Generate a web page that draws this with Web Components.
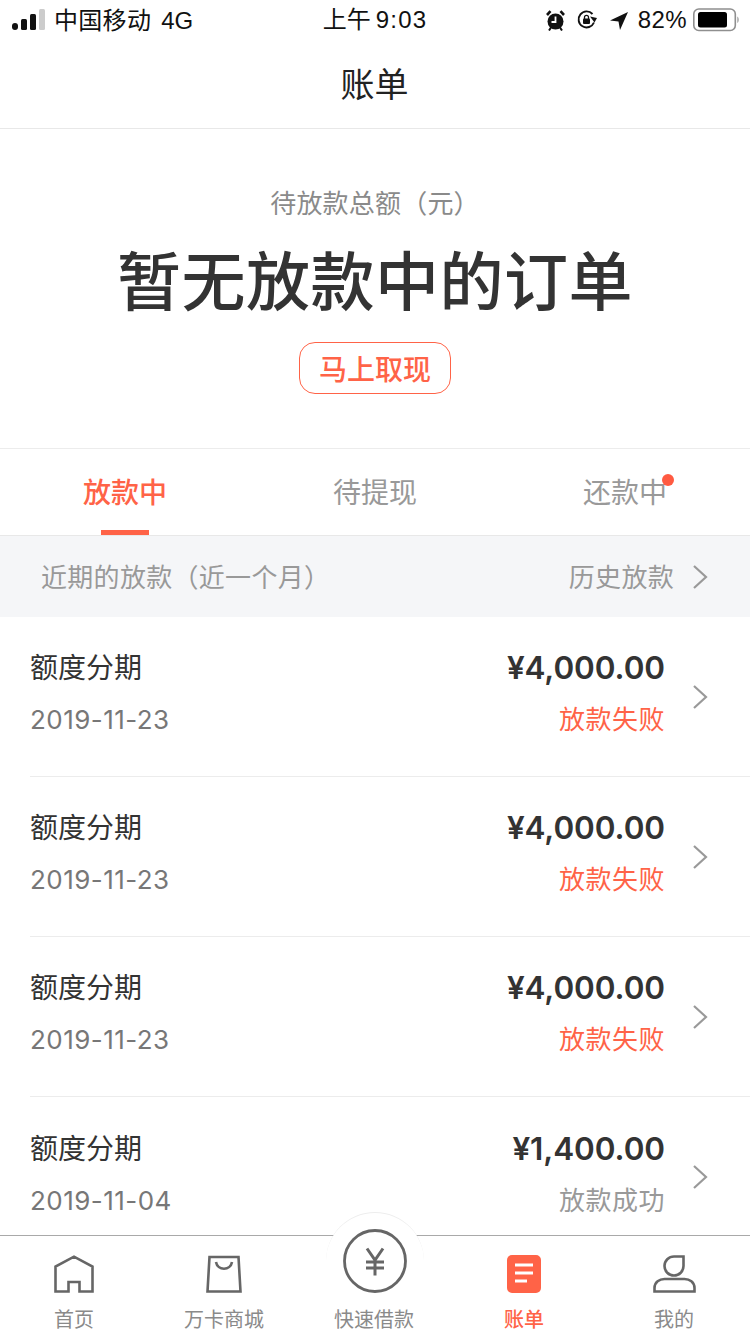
<!DOCTYPE html>
<html lang="zh">
<head>
<meta charset="utf-8">
<style>
  html, body { margin: 0; padding: 0; background: #fff; }
  body {
    width: 750px; height: 1334px; overflow: hidden;
    display: flex; flex-direction: column;
    font-family: "Liberation Sans", "Noto Sans CJK SC", sans-serif;
  }
</style>
</head>
<body>
<status-bar></status-bar>
<nav-title>账单</nav-title>
<summary-panel></summary-panel>
<bill-tabs></bill-tabs>
<section-head></section-head>
<bill-list>
  <bill-row name="额度分期" date="2019-11-23" amount="¥4,000.00" state="放款失败" fail></bill-row>
  <bill-row name="额度分期" date="2019-11-23" amount="¥4,000.00" state="放款失败" fail></bill-row>
  <bill-row name="额度分期" date="2019-11-23" amount="¥4,000.00" state="放款失败" fail></bill-row>
  <bill-row name="额度分期" date="2019-11-04" amount="¥1,400.00" state="放款成功"></bill-row>
</bill-list>
<tab-bar></tab-bar>

<script>
const FONT = '"Liberation Sans", "Noto Sans CJK SC", sans-serif';
const CHEVRON = `<svg width="16" height="26" viewBox="0 0 16 26" fill="none" stroke="#999" stroke-width="2.2"><path d="M2 2l12 11L2 24"/></svg>`;

function define(tag, html, setup) {
  customElements.define(tag, class extends HTMLElement {
    constructor() {
      super();
      this.attachShadow({ mode: 'open' });
    }
    connectedCallback() {
      this.shadowRoot.innerHTML = typeof html === 'function' ? html(this) : html;
      if (setup) setup(this);
    }
  });
}

define('status-bar', `
  <style>
    :host { display: flex; align-items: center; height: 40px; flex: none; padding: 0 11px 0 12px; box-sizing: border-box;
      font: 24px ${FONT}; color: #111; position: relative; }
    .left { display: flex; align-items: center; flex: 1; }
    .carrier { margin: 0 0 4px 9px; letter-spacing: 0.3px; }
    .carrier span { margin-left: 10px; letter-spacing: 0; }
    .time { position: absolute; left: 0; right: 0; top: 0; line-height: 40px; text-align: center; }
    .time span { margin-left: 5px; letter-spacing: 1.2px; }
    .right { display: flex; align-items: center; position: relative; }
    .pct { margin-left: 10px; letter-spacing: 0.4px; }
    svg { display: block; }
  </style>
  <div class="left">
    <svg width="33" height="22" viewBox="0 0 33 22">
      <rect x="0" y="14" width="6" height="7" rx="3" fill="#111"/>
      <rect x="9" y="10" width="6" height="11" rx="1.5" fill="#111"/>
      <rect x="18" y="5" width="6" height="16" rx="1.5" fill="#111"/>
      <rect x="27" y="0" width="6" height="21" rx="1.5" fill="#ccc"/>
    </svg>
    <div class="carrier">中国移动<span>4G</span></div>
  </div>
  <div class="time">上午<span>9:03</span></div>
  <div class="right">
    <svg width="19" height="21" viewBox="0 0 19 21">
      <circle cx="9.500" cy="11.500" r="8" fill="#111"/>
      <path d="M9.500 6.500v5.500H5.500" fill="none" stroke="#fff" stroke-width="1.800"/>
      <path d="M1 5L4.500 1.200M18 5L14.500 1.200" stroke="#111" stroke-width="2.600"/>
      <path d="M3 20.500l2-3M16 20.500l-2-3" stroke="#111" stroke-width="2"/>
    </svg>
    <svg style="margin-left:11px" width="22" height="22" viewBox="0 0 22 22">
      <path d="M18 13.500A8 8 0 1 1 16.500 5" fill="none" stroke="#111" stroke-width="1.900"/>
      <path d="M14 7.500L21 9l-2.500 4.500z" fill="#111"/>
      <rect x="7" y="9.500" width="7" height="5.500" rx="1" fill="#111"/>
      <path d="M8.500 10V8.300a2 2 0 0 1 4 0V10" fill="none" stroke="#111" stroke-width="1.300"/>
    </svg>
    <svg style="margin:2px 0 0 12px" width="18" height="18" viewBox="0 0 18 18">
      <path d="M18 0L10 18 8.500 9.500 0 8.500z" fill="#111"/>
    </svg>
    <div class="pct">82%</div>
    <svg style="margin-left:6px" width="46" height="24" viewBox="0 0 46 24">
      <rect x="0.800" y="1" width="41.500" height="21.500" rx="5" fill="none" stroke="#8f8f8f" stroke-width="1.600"/>
      <rect x="5" y="4" width="29" height="15.500" rx="2.500" fill="#000"/>
      <path d="M44 8.500c1.400.6 2 1.800 2 3.300s-.6 2.700-2 3.300z" fill="#bbb"/>
    </svg>
  </div>
`);

define('nav-title', `
  <style>
    :host { display: flex; align-items: center; justify-content: center; flex: none; height: 89px; box-sizing: border-box;
      padding-bottom: 4px; border-bottom: 1px solid #e8e8e8; font: 34px ${FONT}; color: #222; }
    .t { margin-left: -1px; }
  </style>
  <div class="t"><slot></slot></div>
`);

define('summary-panel', `
  <style>
    :host { display: flex; flex-direction: column; align-items: center; flex: none; height: 320px; box-sizing: border-box;
      padding-top: 56px; border-bottom: 1px solid #ececec; color: #333; font-family: ${FONT}; }
    .label { font-size: 26px; line-height: 38px; color: #8a8a8a; letter-spacing: 0.2px; }
    .big { font-size: 64px; line-height: 76px; margin-top: 22px; font-weight: 500; color: #333; letter-spacing: 0.5px; }
    .btn { margin-top: 21px; box-sizing: border-box; width: 152px; height: 52px; border: 1px solid #ff6347; border-radius: 16px;
      display: flex; align-items: center; justify-content: center; color: #ff6347; font-size: 28px; font-weight: 500; }
  </style>
  <div class="label">待放款总额（元）</div>
  <div class="big">暂无放款中的订单</div>
  <div class="btn">马上取现</div>
`);

define('bill-tabs', `
  <style>
    :host { display: grid; grid-template-columns: repeat(3, 1fr); flex: none; height: 87px; box-sizing: border-box;
      border-bottom: 1px solid #e8e8e8; font: 28px ${FONT}; color: #999; }
    .tab { display: flex; align-items: center; justify-content: center; position: relative; padding-bottom: 2px; }
    .on { color: #ff6347; font-weight: 500; }
    .on::after { content: ""; position: absolute; left: 50%; margin-left: -24px; bottom: 0; width: 48px; height: 5px; background: #ff6347; }
    .label { position: relative; }
    .dot { position: absolute; right: -7px; top: 3px; width: 12px; height: 12px; border-radius: 50%; background: #ff5a41; }
  </style>
  <div class="tab on"><span class="label">放款中</span></div>
  <div class="tab"><span class="label">待提现</span></div>
  <div class="tab"><span class="label">还款中<i class="dot"></i></span></div>
`);

define('section-head', `
  <style>
    :host { display: flex; align-items: center; justify-content: space-between; flex: none; height: 81px; box-sizing: border-box;
      padding: 0 42px 0 41px; background: #f5f6f8; font: 26px ${FONT}; color: #999; }
    .title { margin-bottom: 3px; letter-spacing: 0.3px; }
    .more { display: flex; align-items: center; gap: 18px; }
    .more span { margin-bottom: 3px; letter-spacing: 0.3px; }
    svg { display: block; }
  </style>
  <div class="title">近期的放款（近一个月）</div>
  <div class="more"><span>历史放款</span>${CHEVRON}</div>
`);

define('bill-list', `
  <style>
    :host { display: block; flex: 1; min-height: 0; overflow: hidden; }
  </style>
  <slot></slot>
`);

define('bill-row', (el) => `
  <style>
    :host { display: block; height: 160px; padding-left: 30px; font-family: ${FONT}; }
    .row { display: flex; align-items: center; height: 160px; box-sizing: border-box; padding-right: 42px;
      border-bottom: 1px solid #ececec; }
    :host(:last-child) .row { border-bottom: none; }
    .info { flex: 1; margin-bottom: 6px; }
    .name { font-size: 28px; line-height: 36px; margin-top: 2px; color: #333; }
    .date { font-family: Inter, "Liberation Sans", sans-serif; font-size: 26px; line-height: 36px; margin-top: 15px; color: #777; letter-spacing: 0.45px; }
    .sum { text-align: right; margin: 0 27px 6px 0; }
    .amount { font-family: Inter, "Liberation Sans", sans-serif; font-size: 31.5px; line-height: 36px; margin-top: 1px; font-weight: 600; color: #333; letter-spacing: -0.1px; }
    .state { font-size: 26px; line-height: 36px; margin-top: 16px; color: #999; letter-spacing: 0.5px; }
    .fail { color: #ff6347; }
    svg { display: block; }
  </style>
  <div class="row">
    <div class="info">
      <div class="name">${el.getAttribute('name')}</div>
      <div class="date">${el.getAttribute('date')}</div>
    </div>
    <div class="sum">
      <div class="amount">${el.getAttribute('amount')}</div>
      <div class="state ${el.hasAttribute('fail') ? 'fail' : ''}">${el.getAttribute('state')}</div>
    </div>
    ${CHEVRON}
  </div>
`);

define('tab-item', (el) => `
  <style>
    :host { display: flex; flex-direction: column; align-items: center; justify-content: flex-end; width: 150px; height: 98px;
      position: relative; font: 20px ${FONT}; color: #8a8a8a; }
    :host([active]) { color: #ff6347; font-weight: 500; }
    .icon { height: 48px; display: flex; align-items: flex-end; justify-content: center; }
    .text { line-height: 26px; margin-top: 14px; margin-bottom: 1px; }
    ::slotted(svg) { display: block; }
  </style>
  <div class="icon"><slot></slot></div>
  <div class="text">${el.getAttribute('label')}</div>
`);

define('tab-bar', `
  <style>
    :host { display: flex; flex: none; height: 99px; box-sizing: border-box; border-top: 1px solid #a9a9a9;
      background: #fff; position: relative; }
    /* bump behind the centre button */
    .bump { position: absolute; left: 326px; top: -24px; width: 98px; height: 98px; border-radius: 50%; background: #fff;
      border-top: 1px solid #ededed; box-sizing: border-box; }
    .items { display: flex; position: relative; margin-left: -1px; }
    .fast { position: absolute; left: 343px; top: -7px; }
    svg { display: block; }
  </style>
  <div class="bump"></div>
  <div class="items">
    <tab-item label="首页">
      <svg width="40" height="38" viewBox="0 0 40 38" fill="none" stroke="#666" stroke-width="2.600">
        <path d="M1.500 36.500V11.500L20 1.600l18.500 9.900v25H25.500V27h-11v9.500z"/>
      </svg>
    </tab-item>
    <tab-item label="万卡商城">
      <svg width="36" height="38" viewBox="0 0 36 38" fill="none" stroke="#666" stroke-width="2.600">
        <path d="M3.500 2h29l2 34.500H1.500z"/>
        <path d="M10 7c1.500 9 14.500 9 16 0"/>
      </svg>
    </tab-item>
    <tab-item label="快速借款"></tab-item>
    <tab-item label="账单" active>
      <svg width="34" height="38" viewBox="0 0 34 38">
        <rect width="34" height="38" rx="5" fill="#ff6347"/>
        <path d="M8 10h18M8 18h18M8 26h12" stroke="#fff" stroke-width="2.800" fill="none"/>
      </svg>
    </tab-item>
    <tab-item label="我的">
      <svg width="43" height="38" viewBox="0 0 43 38" fill="none" stroke="#666" stroke-width="2.600">
        <path d="M30.500 1.500V11a9.500 9.500 0 0 1-19 0 9.500 9.500 0 0 1 9.500-9.500z"/>
        <path d="M1.500 36.500V33c0-6 5-9 10-9h20c5 0 10 3 10 9v3.500z"/>
      </svg>
    </tab-item>
  </div>
  <svg class="fast" width="64" height="64" viewBox="0 0 64 64" fill="none" stroke="#666">
    <circle cx="32" cy="32" r="30.500" stroke-width="2.800"/>
    <path d="M24 19.500l8 11.500 8-11.500M32 31v15.500M23 33h18M23 39h18" stroke-width="3"/>
  </svg>
`);
</script>
</body>
</html>
